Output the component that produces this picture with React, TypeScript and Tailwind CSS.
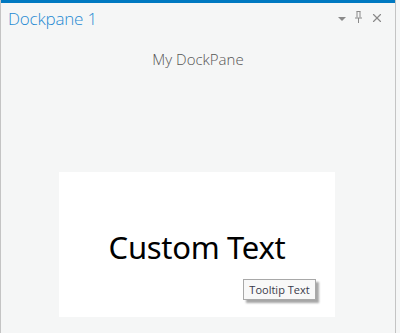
import { X } from 'lucide-react';

export default function App() {
  return (
    <div className="w-[400px] h-[333px] bg-[#f5f6f6] font-['Open_Sans',sans-serif] overflow-hidden">
      <div className="w-[396px] h-full border-l border-r border-[#c4c4c4] flex flex-col">
        {/* Header */}
        <div className="h-[3px] bg-[#0079c1]" />
        <div className="flex items-center h-[30px] pl-[7px] pr-[11px]">
          <span className="text-[17px] font-light text-[#1f8ad3] leading-none tracking-[-0.2px]">
            Dockpane 1
          </span>
          <div className="ml-auto flex items-center gap-[8px] text-[#8a8a8a]">
            <svg width="9" height="5" viewBox="0 0 9 5" className="mt-[3px]">
              <path d="M0 0h8L4 4z" fill="#8a8a8a" />
            </svg>
            <svg width="7" height="12" viewBox="0 0 7 12" className="mb-[2px]">
              <path d="M1.5 0.5h4M2 0.5v6M5 0.5v6M0 7h7M3.5 7v5" stroke="#8a8a8a" strokeWidth="1" fill="none" />
            </svg>
            <X className="w-[14px] h-[14px]" strokeWidth={2} />
          </div>
        </div>

        {/* Content */}
        <div className="flex flex-col items-center">
          <p className="mt-[19px] text-[15px] font-light text-[#555] leading-none">My DockPane</p>
          <div className="relative mt-[105px] ml-[-2px] w-[276px] h-[145px] bg-white flex items-center justify-center">
            <span className="mt-[5px] text-[31px] text-black font-['Noto_Sans',sans-serif] leading-none tracking-[-0.3px]">
              Custom Text
            </span>
            <div className="absolute left-[184px] top-[107px] w-[73px] h-[21px] bg-[#f8f8f8] border border-[#a8a8a8] shadow-[3px_3px_2px_rgba(0,0,0,0.35)] flex items-center justify-center">
              <span className="text-[11px] text-[#3a3a4a] leading-none">Tooltip Text</span>
            </div>
          </div>
        </div>
      </div>
    </div>
  );
}
